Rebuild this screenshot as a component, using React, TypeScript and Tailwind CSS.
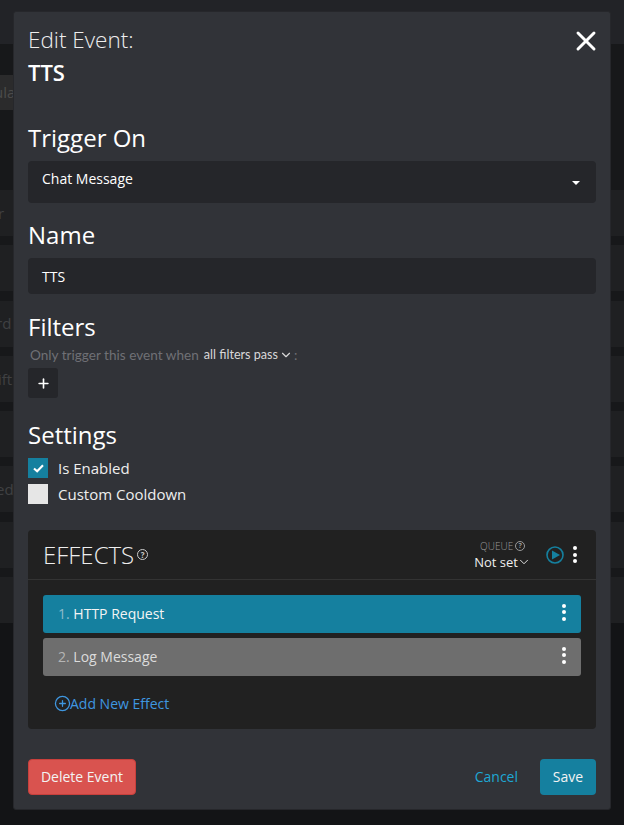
import { ChevronDown, CirclePlus, Plus, X } from 'lucide-react';

const backgroundRows = [
  { text: 'r', offset: 'ml-[-2px]' },
  { text: '', offset: '' },
  { text: 'rd', offset: 'ml-[-4px]' },
  { text: 'ift', offset: 'ml-[-2px]' },
  { text: '', offset: '' },
  { text: 'ed', offset: 'ml-[-4px]' },
  { text: '', offset: '' },
  { text: '', offset: '' },
];

function Dots() {
  return (
    <div className="flex flex-col items-center gap-[2.5px]">
      <span className="w-[4px] h-[4px] rounded-full bg-white" />
      <span className="w-[4px] h-[4px] rounded-full bg-white" />
      <span className="w-[4px] h-[4px] rounded-full bg-white" />
    </div>
  );
}

function HelpIcon({ className }: { className: string }) {
  return (
    <span className={`inline-flex items-center justify-center rounded-full border border-current font-bold ${className}`}>?</span>
  );
}

function EffectRow({ index, name, color, muted, label }: { index: number; name: string; color: string; muted: string; label: string }) {
  return (
    <div className={`h-[38px] rounded-[3px] flex items-center justify-between px-[15px] text-[14px] ${color}`}>
      <div className="mb-[2px]">
        <span className={muted}>{index}. </span>
        <span className={label}>{name}</span>
      </div>
      <div className="mb-[4px]">
        <Dots />
      </div>
    </div>
  );
}

export default function App() {
  return (
    <div className="relative w-[624px] h-[825px] overflow-hidden bg-[#131416] font-['Open_Sans',sans-serif]">
      {/* page dimmed behind the modal */}
      <div className="h-[44px] bg-[#222327]" />
      <div className="bg-[#17181a]">
        <div className="h-[146px] pt-[31px]">
          <div className="h-[35px] bg-gradient-to-r from-[#2b2b2c] from-[13px] to-transparent to-[13px] flex items-center text-[15px] text-[#4b4b4b]">
            <span className="ml-[-6px]">ula</span>
          </div>
        </div>
        <div className="flex flex-col gap-[9.3px]">
          {backgroundRows.map((row, i) => (
            <div key={i} className="h-[46px] bg-[#1f2022] flex items-center text-[15px] text-[#3f4042]">
              <span className={row.offset}>{row.text}</span>
            </div>
          ))}
        </div>
      </div>

      <div className="absolute left-[13px] top-[11px] w-[598px] h-[799px] rounded-[3px] bg-[#313338] border border-[#26272b] px-[14px] flex flex-col text-white">
        <div className="pt-[13px] text-[22.5px] leading-[30px] font-light text-[#eeeeee]">Edit Event:</div>
        <div className="mt-[3px] text-[22px] leading-[29px] font-semibold">TTS</div>
        <button className="absolute right-[8px] top-[13px] text-white">
          <X className="w-[32px] h-[32px]" strokeWidth={2.2} />
        </button>

        <h2 className="mt-[35px] text-[24px] leading-[32px]">Trigger On</h2>
        <div className="mt-[7px] h-[42px] rounded-[4px] bg-[#25262a] flex items-center justify-between pl-[14px] pr-[16px] text-[14px] pb-[8px]">
          <span>Chat Message</span>
          <span className="mt-[9px] w-0 h-0 border-x-[4px] border-x-transparent border-t-[4px] border-t-white" />
        </div>

        <h2 className="mt-[16px] text-[24px] leading-[32px]">Name</h2>
        <div className="mt-[7px] h-[36px] rounded-[4px] bg-[#25262a] flex items-center pl-[14px] text-[14px]">TTS</div>

        <h2 className="mt-[18px] text-[24px] leading-[30px]">Filters</h2>
        <div className="mt-[4px] ml-[2px] flex items-center text-[13.6px] leading-[18px] text-[#6f7075] font-['Lato',sans-serif]">
          <span>Only trigger this event when</span>
          <span className="ml-[5px] text-[12.6px] text-[#d8d8d8]">all filters pass</span>
          <ChevronDown className="ml-[1px] w-[14px] h-[14px] text-[#d8d8d8]" strokeWidth={2} />
          <span className="ml-[1px]">:</span>
        </div>
        <button className="mt-[4px] w-[30px] h-[30px] rounded-[3px] bg-[#25262a] flex items-center justify-center">
          <Plus className="w-[15px] h-[15px]" strokeWidth={2.6} />
        </button>

        <h2 className="mt-[21px] text-[24px] leading-[32px]">Settings</h2>
        <div className="mt-[7px] flex items-center h-[20px] text-[15px] text-[#eeeeee]">
          <span className="w-[20px] h-[20px] bg-[#15809f] flex items-center justify-center">
            <svg viewBox="0 0 12 10" className="w-[11px] h-[9px]" fill="none" stroke="white" strokeWidth="2.4">
              <path d="M1 5 L4.5 8 L11 1.5" />
            </svg>
          </span>
          <span className="ml-[10px]">Is Enabled</span>
        </div>
        <div className="mt-[6px] flex items-center h-[20px] text-[15px] text-[#eeeeee]">
          <span className="w-[20px] h-[20px] bg-[#e6e6e6]" />
          <span className="ml-[10px]">Custom Cooldown</span>
        </div>

        <div className="mt-[26px] h-[199px] rounded-[4px] bg-[#212121] flex flex-col">
          <div className="h-[50px] shrink-0 border-b border-[#333333] flex items-center justify-between pl-[15px] pr-[19px]">
            <div className="flex items-center">
              <span className="text-[24px] leading-[32px] font-light text-[#eeeeee]">EFFECTS</span>
              <HelpIcon className="ml-[3px] w-[11px] h-[11px] text-[8px] text-[#cccccc]" />
            </div>
            <div className="flex items-center">
              <div className="flex flex-col items-center mr-[15px]">
                <div className="flex items-center text-[10px] leading-[14px] font-light text-[#999999]">
                  QUEUE
                  <HelpIcon className="ml-[2px] w-[10px] h-[10px] text-[7px]" />
                </div>
                <div className="flex items-center text-[13px] leading-[18px] text-[#eeeeee]">
                  Not set
                  <ChevronDown className="ml-[-1px] w-[14px] h-[14px]" strokeWidth={1.6} />
                </div>
              </div>
              <svg viewBox="0 0 18 18" className="w-[18px] h-[18px] mr-[9px]">
                <circle cx="9" cy="9" r="8" fill="none" stroke="#15809f" strokeWidth="1.6" />
                <path d="M6 4.4 L14 9 L6 13.6 Z" fill="#15809f" />
              </svg>
              <Dots />
            </div>
          </div>
          <div className="px-[15px] pt-[15px] flex flex-col gap-[5px]">
            <EffectRow index={1} name="HTTP Request" color="bg-[#15809f]" muted="text-[#8fbccb]" label="text-[#f4f4f4]" />
            <EffectRow index={2} name="Log Message" color="bg-[#6e6e6e]" muted="text-[#b5b5b5]" label="text-[#dcdcdc]" />
          </div>
          <div className="mt-[18px] ml-[26px] flex items-center text-[14px] leading-[19px] text-[#3f97e0]">
            <CirclePlus className="w-[17px] h-[17px] mr-[-1px]" strokeWidth={1.8} />
            <span>Add New Effect</span>
          </div>
        </div>

        <div className="mt-[30px] flex items-center justify-between">
          <button className="w-[108px] h-[36px] pb-[2px] rounded-[4px] bg-[#d9534f] border border-[#c9403c] text-[14px] text-[#f3f3f3]">Delete Event</button>
          <div className="flex items-center">
            <span className="pb-[2px] text-[14px] text-[#1ea7d4] mr-[22px]">Cancel</span>
            <button className="w-[56px] h-[36px] pb-[2px] rounded-[4px] bg-[#15809f] text-[14px] text-[#f3f3f3]">Save</button>
          </div>
        </div>
      </div>
    </div>
  );
}
